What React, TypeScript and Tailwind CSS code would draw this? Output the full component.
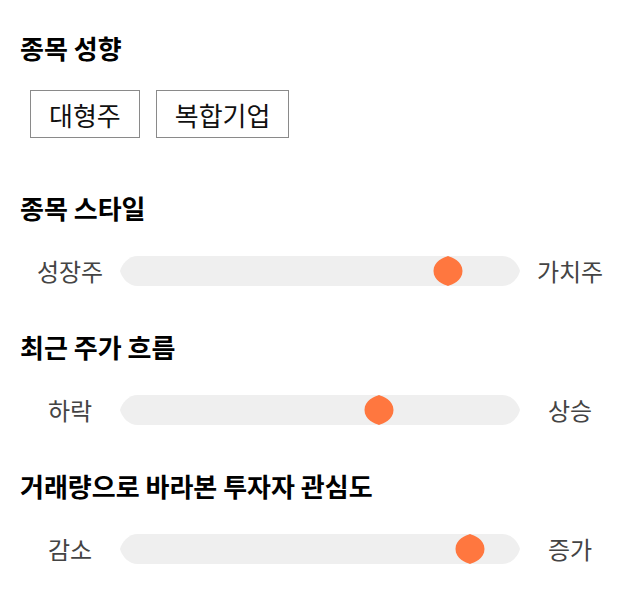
import React from "react";

const FONT = { fontFamily: '"Noto Sans CJK KR", "Noto Sans", sans-serif' };

const TAGS = ["대형주", "복합기업"];

const SLIDERS = [
  { title: "종목 스타일", left: "성장주", right: "가치주", pos: 313 },
  { title: "최근 주가 흐름", left: "하락", right: "상승", pos: 244 },
  { title: "거래량으로 바라본 투자자 관심도", left: "감소", right: "증가", pos: 335 },
];

function Track({ pos }: { pos: number }) {
  return (
    <div className="relative w-[400px] h-[30px]">
      <svg width="400" height="30" viewBox="0 0 400 30" className="block">
        <path
          d="M18 0 H382 C392 0 398 8 400 15 C398 22 392 30 382 30 H18 C8 30 2 22 0 15 C2 8 8 0 18 0 Z"
          fill="#efefef"
        />
      </svg>
      <svg
        width="30"
        height="30"
        viewBox="0 0 30 30"
        className="absolute top-0"
        style={{ left: pos }}
      >
        <path
          d="M15 0 C19 1.5 29.5 5 29.5 15 C29.5 25 19 28.5 15 30 C11 28.5 0.5 25 0.5 15 C0.5 5 11 1.5 15 0 Z"
          fill="#ff773f"
        />
      </svg>
    </div>
  );
}

export default function App() {
  return (
    <div className="w-[640px] min-h-[606px] bg-white px-5 pt-[30px]" style={FONT}>
      <h2 className="text-[26px] leading-[36px] font-bold text-black">종목 성향</h2>
      <div className="flex gap-4 ml-[10px] mt-[24px]">
        {TAGS.map((t) => (
          <div
            key={t}
            className="h-[48px] px-[18px] flex items-center border border-[#8a8a8a] text-[26px] text-[#111]"
          >
            {t}
          </div>
        ))}
      </div>

      {SLIDERS.map((s, i) => (
        <div key={s.title} className={i === 0 ? "mt-[52px]" : "mt-[40px]"}>
          <h2 className="text-[26px] leading-[36px] font-bold text-black">{s.title}</h2>
          <div className="flex items-center h-[36px] mt-[27px]">
            <span className="w-[100px] text-center text-[24px] text-[#444]">{s.left}</span>
            <Track pos={s.pos} />
            <span className="w-[100px] text-center text-[24px] text-[#444]">{s.right}</span>
          </div>
        </div>
      ))}
    </div>
  );
}
